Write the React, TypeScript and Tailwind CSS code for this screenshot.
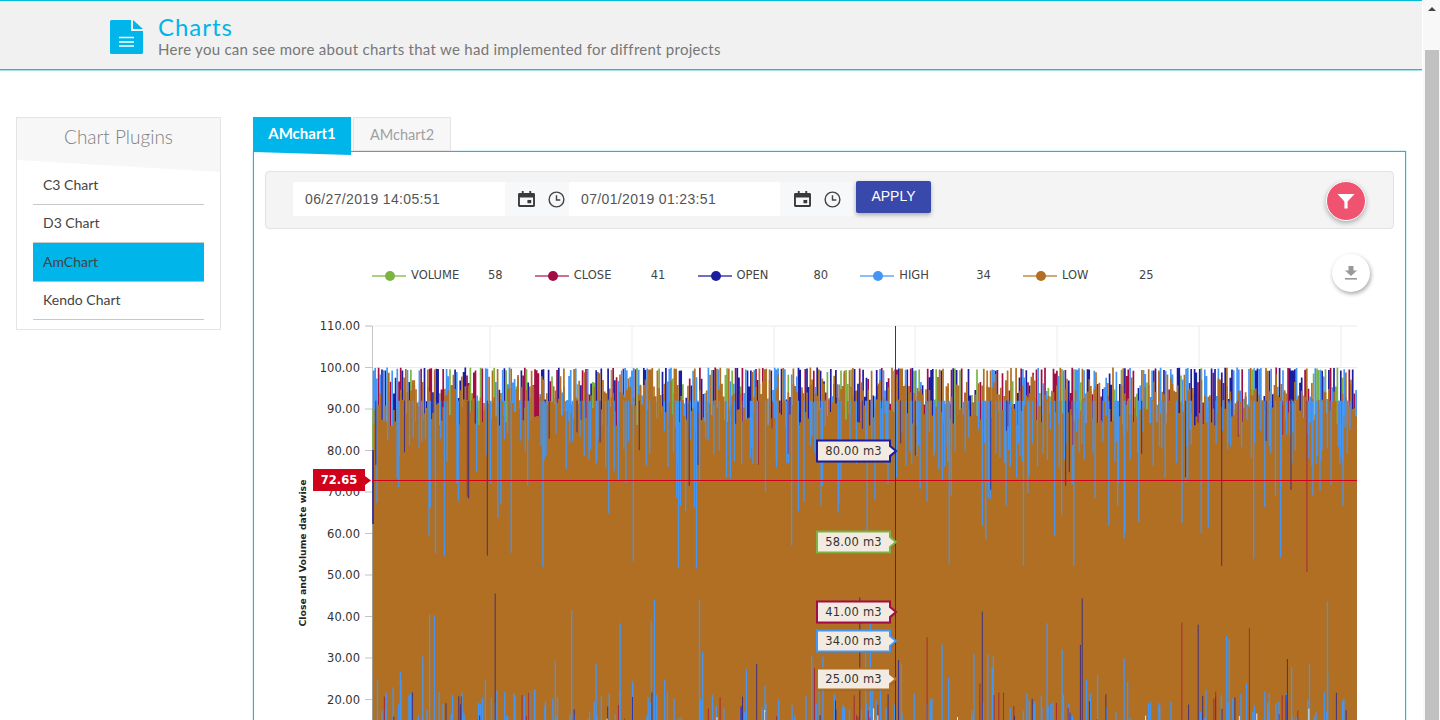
const navItems = [
  { label: "C3 Chart" },
  { label: "D3 Chart" },
  { label: "AmChart", active: true },
  { label: "Kendo Chart" },
];

const legend = [
  { name: "VOLUME", value: "58", color: "#7cb342", line: "#8fc060" },
  { name: "CLOSE", value: "41", color: "#a30d45", line: "#b8406c" },
  { name: "OPEN", value: "80", color: "#1c1c9e", line: "#3f3fae" },
  { name: "HIGH", value: "34", color: "#4496f5", line: "#63a8f7" },
  { name: "LOW", value: "25", color: "#b06f22", line: "#c08a4e" },
];

const balloons = [
  { y: 451, text: "80.00 m3", color: "#1c1c9e" },
  { y: 542, text: "58.00 m3", color: "#7cb342" },
  { y: 612, text: "41.00 m3", color: "#a30d45" },
  { y: 641, text: "34.00 m3", color: "#4496f5" },
  { y: 679, text: "25.00 m3", color: "#b06f22" },
];

const yVal = (v: number) => 326 + (110 - v) * 4.15;

// seeded so every render draws the same noise
function buildSeries() {
  let seed = 72165;
  const rnd = () => {
    seed = (seed * 1664525 + 1013904223) % 4294967296;
    return seed / 4294967296;
  };
  const p: Record<string, string> = { green: "", close: "", open: "", high: "", low: "", brownTop: "", streak: "", streakDark: "", streakRed: "", pale: "" };
  const seg = (k: string, x: number, top: number, bottom: number) => {
    p[k] += `M${x.toFixed(1)} ${yVal(top).toFixed(1)}V${yVal(bottom).toFixed(1)}`;
  };
  const pick = () => {
    const r = rnd();
    if (r < 0.13) return "green";
    if (r < 0.33) return "close";
    if (r < 0.55) return "open";
    if (r < 0.82) return "high";
    return "brownTop";
  };
  for (let x = 373.5; x < 1357; x += 1.7) {
    const top = rnd() < 0.5 ? 100 - rnd() * 0.8 : 99 - rnd() * 8;
    seg(pick(), x, top, 10);

    const t = rnd();
    let brown = 92 - rnd() * 6;
    if (t < 0.14) brown = 99 - rnd() * 5;
    else if (t < 0.45) brown = 96 - rnd() * 4;
    seg("low", x, brown, 10);
  }
  // thin lines that cross the brown band from above and from below
  for (let i = 0; i < 300; i++) {
    const x = 373.5 + rnd() * 983;
    const r = rnd();
    const k = r < 0.88 ? "streak" : r < 0.96 ? "streakDark" : "streakRed";
    const len = rnd();
    const end = len < 0.6 ? 76 + rnd() * 10 : len < 0.9 ? 66 + rnd() * 12 : 50 + rnd() * 16;
    seg(k, x, 92, end);
  }
  for (let i = 0; i < 300; i++) {
    const x = 373.5 + rnd() * 983;
    const r = rnd();
    const k = r < 0.74 ? "streak" : r < 0.9 ? "streakDark" : "streakRed";
    const len = rnd();
    const end = len < 0.72 ? 14 + rnd() * 8 : len < 0.92 ? 20 + rnd() * 11 : 30 + rnd() * 16;
    seg(k, x, end, 10);
  }
  for (let i = 0; i < 10; i++) {
    seg("pale", 373.5 + rnd() * 983, 15 + rnd() * 3, 10);
  }
  return p;
}

const series = buildSeries();

function CalendarIcon() {
  return (
    <svg width="17" height="16" viewBox="0 0 18 17" fill="#3a3a3a">
      <path d="M4 0h2v2h6V0h2v2h2.5A1.5 1.5 0 0 1 18 3.5v12a1.5 1.5 0 0 1-1.5 1.5h-15A1.5 1.5 0 0 1 0 15.5v-12A1.5 1.5 0 0 1 1.5 2H4V0Zm-2 7v8h14V7H2Z" />
      <rect x="10" y="9.5" width="4" height="3.5" />
    </svg>
  );
}

function ClockIcon() {
  return (
    <svg width="17" height="17" viewBox="0 0 18 18" fill="none" stroke="#444444" strokeWidth="1.5">
      <circle cx="9" cy="9" r="7.8" />
      <path d="M9 4.5V9.6H13" />
    </svg>
  );
}

function Chart() {
  return (
    <svg width="1151" height="405" viewBox="254 315 1151 405" className="block">
      {[490, 632, 774, 915, 1057, 1199, 1341].map((x) => (
        <line key={x} x1={x} x2={x} y1={326} y2={368} stroke="#ececec" />
      ))}
      <line x1="366" x2="1357" y1="326" y2="326" stroke="#ececec" />
      <line x1="366" x2="1357" y1="367.5" y2="367.5" stroke="#ececec" />

      {[110, 100, 90, 80, 70, 60, 50, 40, 30, 20].map((v) => (
        <g key={v}>
          <line x1="365" x2="372" y1={yVal(v)} y2={yVal(v)} stroke="#c4c4c4" />
          <text x="360" y={yVal(v) + 4} textAnchor="end" fontSize="11.5" fill="#333" fontFamily="'DejaVu Sans', sans-serif">
            {v.toFixed(2)}
          </text>
        </g>
      ))}
      <text
        transform="translate(306 553) rotate(-90)"
        textAnchor="middle"
        fontSize="9.3"
        fontWeight="700"
        fill="#222"
        fontFamily="'DejaVu Sans', sans-serif"
      >
        Close and Volume date wise
      </text>

      <line x1="372.5" x2="372.5" y1="326" y2="720" stroke="#c4c4c4" />
      <path d={series.green} stroke="#7cb342" strokeWidth="1.7" fill="none" />
      <path d={series.close} stroke="#a30d45" strokeWidth="1.7" fill="none" />
      <path d={series.open} stroke="#1c1c9e" strokeWidth="1.7" fill="none" />
      <path d={series.high} stroke="#4496f5" strokeWidth="1.7" fill="none" />
      <path d={series.brownTop} stroke="#b06f22" strokeWidth="1.7" fill="none" />
      <path d={series.low} stroke="#b06f22" strokeWidth="1.7" fill="none" />
      <path d={series.streak} stroke="#4496f5" strokeWidth="1.3" fill="none" />
      <path d={series.streakDark} stroke="#1c1c9e" strokeWidth="1" strokeOpacity="0.75" fill="none" />
      <path d={series.streakRed} stroke="#a30d45" strokeWidth="1" strokeOpacity="0.7" fill="none" />
      <path d={series.pale} stroke="#e8eef5" strokeWidth="1" fill="none" />
      <line x1="373" x2="373" y1="408" y2="450" stroke="#7cb342" strokeWidth="1.4" />
      <line x1="373" x2="373" y1="450" y2="524" stroke="#1c1c9e" strokeWidth="1.4" />

      <line x1="895.5" x2="895.5" y1="326" y2="720" stroke="#9a1020" />
      <line x1="372" x2="1357" y1="480.5" y2="480.5" stroke="#d0021b" />

      <path d="M313 469H365V476L371 480.5L365 485V491H313Z" fill="#d0021b" />
      <text x="339" y="484" textAnchor="middle" fontSize="11.5" fontWeight="600" fill="#fff" fontFamily="'DejaVu Sans', sans-serif">
        72.65
      </text>

      {balloons.map((b) => (
        <g key={b.text}>
          <path
            d={`M818 ${b.y - 9.5}H891V${b.y - 4}L897 ${b.y + 1}L891 ${b.y + 6}V${b.y + 11.5}H818Z`}
            fill="#000"
            fillOpacity="0.22"
          />
          <path
            d={`M817 ${b.y - 10.5}H890V${b.y - 5}L896 ${b.y}L890 ${b.y + 5}V${b.y + 10.5}H817Z`}
            fill="#f3ebe1"
            stroke={b.color}
            strokeWidth="2"
          />
          <text x="853.5" y={b.y + 4} textAnchor="middle" fontSize="11.5" letterSpacing="0.2" fill="#333" fontFamily="'DejaVu Sans', sans-serif">
            {b.text}
          </text>
        </g>
      ))}
    </svg>
  );
}

export default function App() {
  return (
    <div className="flex h-[720px] overflow-hidden bg-white font-['Lato',sans-serif]">
      <div className="w-[1423px] shrink-0">
        <header className="flex h-[70px] w-[1422px] items-center gap-[15px] border-t border-b border-t-[#00bcd4] border-b-[#26b7c9] bg-[#f1f1f1] pl-[110px] shadow-[0_1px_0_#a5e3ea]">
          <svg width="33" height="34" viewBox="0 0 33 34" className="mt-[3px]">
            <path d="M1.5 0H21V11H33V32.5A1.5 1.5 0 0 1 31.5 34H1.5A1.5 1.5 0 0 1 0 32.5V1.5A1.5 1.5 0 0 1 1.5 0Z" fill="#00b5e9" />
            <path d="M23 0L33 9H23Z" fill="#00b5e9" />
            <path d="M9 17.5H24M9 22H24M9 26H24" stroke="#fff" strokeWidth="1.4" />
          </svg>
          <div className="mt-[2px] flex flex-col">
            <h1 className="text-[24px] leading-[26px] font-normal tracking-[0.95px] text-[#00b5e9]">Charts</h1>
            <p className="text-[15px] leading-[18px] tracking-[0.28px] text-[#777777]">
              Here you can see more about charts that we had implemented for diffrent projects
            </p>
          </div>
        </header>

        <div className="flex pt-[47px] pl-4">
          <aside className="h-[213px] w-[205px] border border-[#e4e4e4]">
            <div className="flex h-[54px] items-start justify-center bg-[#f7f7f8] pt-[5px] text-[19px] font-light text-[#808080] [clip-path:polygon(0_0,100%_0,100%_100%,0_78%)]">
              Chart Plugins
            </div>
            <nav className="-mt-[6px] flex flex-col px-4">
              {navItems.map((item) => (
                <a
                  key={item.label}
                  className={`flex h-[38.5px] items-center border-b pb-[1px] pl-[10px] text-[14px] text-[#444444] ${
                    item.active ? "border-b-[#a9c4d0] bg-[#00b5e9]" : "border-b-[#c8c8c8]"
                  }`}
                >
                  {item.label}
                </a>
              ))}
            </nav>
          </aside>

          <section className="ml-8 w-[1153px]">
            <div className="relative z-10 flex h-[34px] items-start gap-[2px]">
              <div className="flex h-[38px] w-[98px] items-start justify-center bg-[#00b5e9] pt-[5px] text-[15px] font-bold text-white [clip-path:polygon(0_0,100%_0,100%_100%,0_92%)]">
                AMchart1
              </div>
              <div className="flex h-[34px] w-[98px] items-start justify-center border border-[#e4e4e4] bg-[#f7f7f8] pt-[6px] text-[14.5px] text-[#a0a0a0]">
                AMchart2
              </div>
            </div>

            <div className="border border-[#1eb6dc] pt-[19px] shadow-[0_0_1px_#1eb6dc]">
              <div className="mx-[11px] flex h-[58px] items-start rounded border border-[#e2e2e2] bg-[#f4f4f4] pt-[9px] pl-[27px]">
                <div className="mt-[1px] flex h-[34px] bg-[#f7f8f9] font-['Liberation_Sans',sans-serif] text-[14px] tracking-[0.35px] text-[#555555]">
                  <div className="flex w-[212px] items-center bg-white pl-3">06/27/2019 14:05:51</div>
                  <div className="flex w-[64px] items-center gap-[13px] pl-[13px]">
                    <CalendarIcon />
                    <ClockIcon />
                  </div>
                  <div className="flex w-[211px] items-center bg-white pl-3">07/01/2019 01:23:51</div>
                  <div className="flex w-[73px] items-center gap-[13px] pl-[14px]">
                    <CalendarIcon />
                    <ClockIcon />
                  </div>
                </div>
                <button className="ml-[3px] h-[32px] w-[75px] rounded-[2px] bg-[#3949ab] pb-[2px] font-['Liberation_Sans',sans-serif] text-[14px] text-white shadow-[0_2px_4px_rgba(0,0,0,0.3)]">
                  APPLY
                </button>
                <button className="mr-[27px] ml-auto flex h-[40px] w-[40px] items-center justify-center rounded-full border border-white bg-[#ef5370] shadow-[0_2px_5px_rgba(0,0,0,0.3)]">
                  <svg width="20" height="20" viewBox="0 0 20 20" fill="#fff">
                    <path d="M1.5 3H18.5L11.6 10.5V17.5H8.4V10.5Z" />
                  </svg>
                </button>
              </div>

              <div className="mt-[27px] flex h-[40px] items-center pr-[35px] pl-[118px] font-['DejaVu_Sans',sans-serif] text-[11.5px] text-[#444444]">
                {legend.map((l) => (
                  <div key={l.name} className="flex w-[162.75px] shrink-0 items-center">
                    <svg width="34" height="12" viewBox="0 0 34 12" className="mr-[5px]">
                      <line x1="0" x2="34" y1="6" y2="6" stroke={l.line} strokeWidth="1.3" />
                      <circle cx="18" cy="6" r="5" fill={l.color} />
                    </svg>
                    <span className="w-[77px]">{l.name}</span>
                    <span>{l.value}</span>
                  </div>
                ))}
                <button className="mt-[-6px] ml-auto flex h-[38px] w-[38px] items-center justify-center rounded-full bg-white shadow-[1px_2px_4px_rgba(0,0,0,0.35)]">
                  <svg width="14" height="14" viewBox="0 0 14 14" fill="#999999">
                    <path d="M4.5 0H9.5V4.5H13L7 10L1 4.5H4.5Z" />
                    <rect x="1" y="12" width="12" height="1.6" />
                  </svg>
                </button>
              </div>

              <div className="mt-[19px]">
                <Chart />
              </div>
            </div>
          </section>
        </div>
      </div>

      <div className="flex w-[17px] flex-col items-center bg-[#f8f8f8]">
        <svg width="10" height="6" viewBox="0 0 10 6" fill="#444444" className="mt-[6px]">
          <path d="M5 1L9 5H1Z" />
        </svg>
        <div className="mt-[38px] w-[14px] flex-1 bg-[#c1c1c1]" />
      </div>
    </div>
  );
}
